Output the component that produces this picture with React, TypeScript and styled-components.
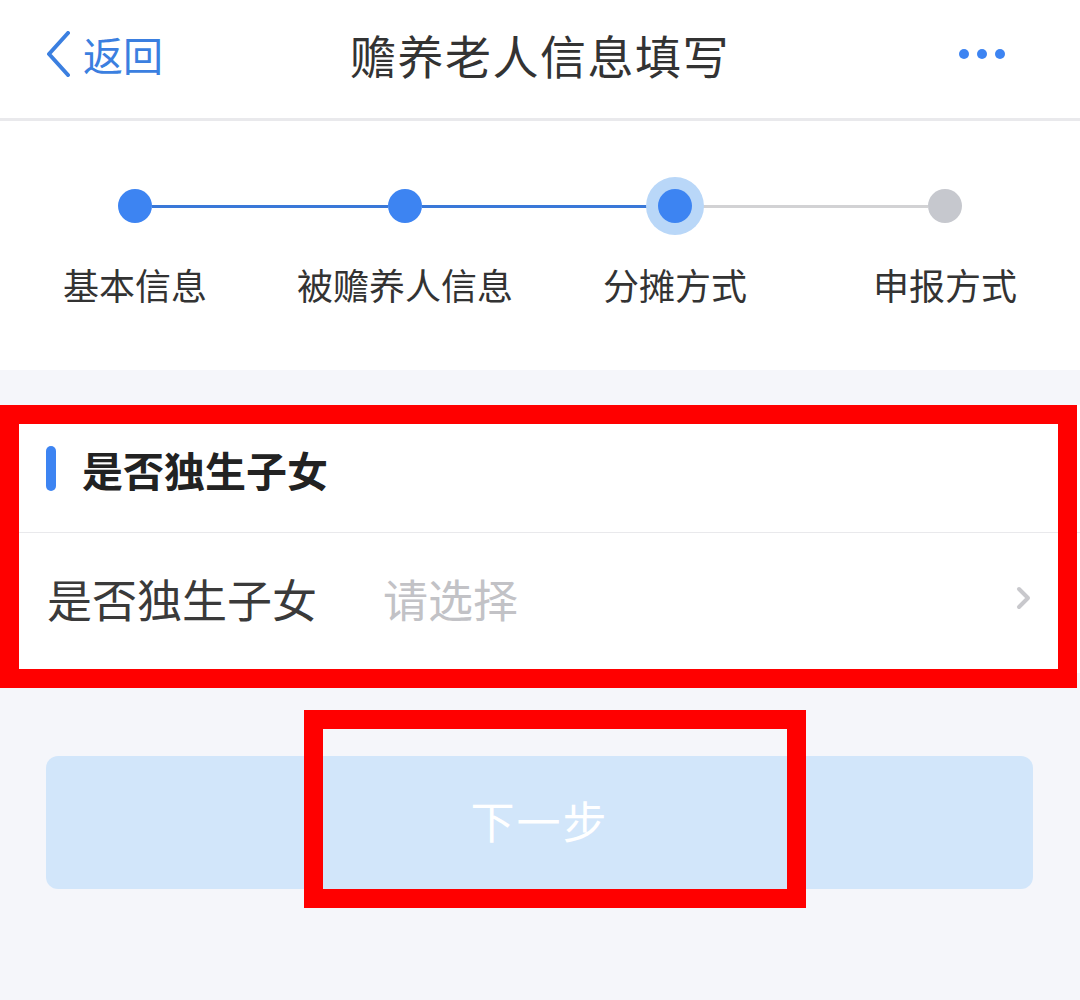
import React from 'react';
import styled, { createGlobalStyle } from 'styled-components';

const GlobalStyle = createGlobalStyle`
  html, body {
    margin: 0;
    padding: 0;
    background: #f5f6fa;
    font-family: 'Noto Sans CJK SC', 'Noto Sans', sans-serif;
  }
`;

const Page = styled.div`
  position: relative;
  width: 1080px;
  min-height: 1000px;
  background: #f5f6fa;
  overflow: hidden;
`;

const NavBar = styled.header`
  height: 121px;
  display: grid;
  grid-template-columns: 1fr auto 1fr;
  align-items: center;
  padding: 0 45px 11px;
  box-sizing: border-box;
  background: #fff;
  border-bottom: 3px solid #e9e9ec;
`;

const BackButton = styled.div`
  display: flex;
  align-items: center;
  gap: 12px;
  color: #3b7fe0;
  font-size: 40px;
  line-height: 1;
`;

const NavTitle = styled.h1`
  margin: 0;
  font-size: 46px;
  font-weight: 400;
  color: #333;
  letter-spacing: 1.5px;
  line-height: 1;
`;

const MoreDots = styled.div`
  justify-self: end;
  display: flex;
  gap: 8px;
  padding-right: 30px;

  span {
    width: 10px;
    height: 10px;
    border-radius: 50%;
    background: #3d84f2;
  }
`;

const StepsPanel = styled.section`
  background: #fff;
  height: 249px;
  padding-top: 68px;
  box-sizing: border-box;
`;

const Track = styled.div`
  display: flex;
  align-items: center;
  padding: 0 118px;
  height: 34px;
`;

const Dot = styled.div<{ $state: 'done' | 'active' | 'todo' }>`
  flex: none;
  width: 34px;
  height: 34px;
  border-radius: 50%;
  position: relative;
  z-index: 1;
  background: ${p => (p.$state === 'todo' ? '#c6c8ce' : '#3d84f2')};
  box-shadow: ${p => (p.$state === 'active' ? '0 0 0 12px #b9d7f8' : 'none')};
`;

const Line = styled.div<{ $on: boolean }>`
  flex: 1;
  height: 3px;
  background: ${p => (p.$on ? '#3a78d8' : '#d2d2d4')};
`;

const Labels = styled.div`
  display: grid;
  grid-template-columns: repeat(4, 1fr);
  margin-top: 43px;
`;

const Label = styled.div`
  text-align: center;
  font-size: 36px;
  line-height: 36px;
  color: #333;
`;

const Card = styled.section`
  margin-top: 35px;
  padding-bottom: 10px;
  background: #fff;
`;

const CardHead = styled.div`
  height: 128px;
  display: flex;
  align-items: center;
  gap: 26px;
  padding-left: 46px;
  border-bottom: 1px solid #e9e9ec;
  box-sizing: border-box;
  font-size: 41px;
  font-weight: 700;
  color: #222;
`;

const Bar = styled.span`
  width: 10px;
  height: 45px;
  border-radius: 5px;
  background: #3d84f2;
`;

const FieldRow = styled.div`
  height: 130px;
  display: flex;
  align-items: center;
  padding: 0 48px 0 47px;
  font-size: 45px;
`;

const FieldLabel = styled.span`
  color: #3a3a3a;
  width: 336px;
`;

const Placeholder = styled.span`
  flex: 1;
  color: #c2c2c6;
`;

const NextButton = styled.button`
  display: block;
  margin: 83px 47px 0 46px;
  width: calc(100% - 93px);
  height: 133px;
  border: none;
  border-radius: 12px;
  background: #d2e6fa;
  color: #fff;
  font-family: inherit;
  font-size: 44px;
  letter-spacing: 2px;
  padding-bottom: 6px;
`;

const Annotation = styled.div`
  position: absolute;
  border: 19px solid #ff0000;
  box-sizing: border-box;
  pointer-events: none;
`;

const steps = ['基本信息', '被赡养人信息', '分摊方式', '申报方式'];
const current = 2;

export default function App() {
  return (
    <Page>
      <GlobalStyle />
      <NavBar>
        <BackButton>
          <svg width="26" height="46" viewBox="0 0 26 46" fill="none">
            <path d="M23 2 L4 23 L23 44" stroke="#3b7fe0" strokeWidth="4" strokeLinecap="round" strokeLinejoin="round" />
          </svg>
          返回
        </BackButton>
        <NavTitle>赡养老人信息填写</NavTitle>
        <MoreDots>
          <span />
          <span />
          <span />
        </MoreDots>
      </NavBar>

      <StepsPanel>
        <Track>
          {steps.map((s, i) => (
            <React.Fragment key={s}>
              <Dot $state={i < current ? 'done' : i === current ? 'active' : 'todo'} />
              {i < steps.length - 1 && <Line $on={i < current} />}
            </React.Fragment>
          ))}
        </Track>
        <Labels>
          {steps.map(s => (
            <Label key={s}>{s}</Label>
          ))}
        </Labels>
      </StepsPanel>

      <Card>
        <CardHead>
          <Bar />
          是否独生子女
        </CardHead>
        <FieldRow>
          <FieldLabel>是否独生子女</FieldLabel>
          <Placeholder>请选择</Placeholder>
          <svg width="16" height="24" viewBox="0 0 16 24" fill="none">
            <path d="M3 3 L12 12 L3 21" stroke="#c8c8cc" strokeWidth="4" strokeLinecap="round" strokeLinejoin="round" />
          </svg>
        </FieldRow>
      </Card>

      <NextButton>下一步</NextButton>

      <Annotation style={{ left: 0, top: 405, width: 1077, height: 283 }} />
      <Annotation style={{ left: 304, top: 710, width: 502, height: 198 }} />
    </Page>
  );
}
